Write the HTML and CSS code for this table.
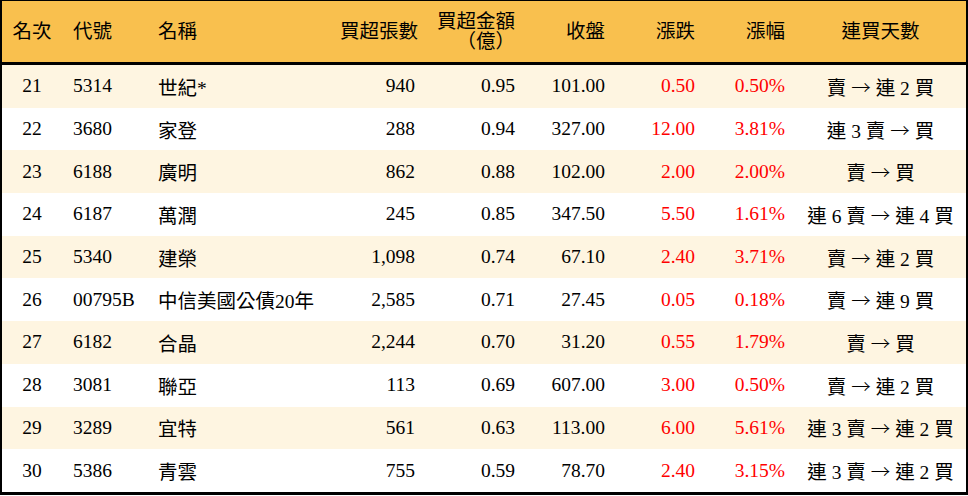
FILE: index.html
```html
<!DOCTYPE html>
<html lang="zh-Hant">
<head>
<meta charset="utf-8">
<title>買超排行</title>
<link rel="stylesheet" href="styles.css">
</head>
<body>
<div class="frame">
<table class="rank">
<colgroup>
<col class="c-rank"><col class="c-code"><col class="c-name"><col class="c-vol"><col class="c-amt"><col class="c-close"><col class="c-chg"><col class="c-pct"><col class="c-days">
</colgroup>
<thead>
<tr>
<th class="ctr">名次</th>
<th class="lft">代號</th>
<th class="lft">名稱</th>
<th class="rgt">買超張數</th>
<th class="rgt">買超金額<br>（億）</th>
<th class="rgt">收盤</th>
<th class="rgt">漲跌</th>
<th class="rgt">漲幅</th>
<th class="ctr">連買天數</th>
</tr>
</thead>
<tbody>
<tr class="alt"><td class="ctr">21</td><td class="lft">5314</td><td class="lft">世紀*</td><td class="rgt">940</td><td class="rgt">0.95</td><td class="rgt">101.00</td><td class="rgt up">0.50</td><td class="rgt up">0.50%</td><td class="ctr">賣 <span class="arw">→</span> 連 2 買</td></tr>
<tr><td class="ctr">22</td><td class="lft">3680</td><td class="lft">家登</td><td class="rgt">288</td><td class="rgt">0.94</td><td class="rgt">327.00</td><td class="rgt up">12.00</td><td class="rgt up">3.81%</td><td class="ctr">連 3 賣 <span class="arw">→</span> 買</td></tr>
<tr class="alt"><td class="ctr">23</td><td class="lft">6188</td><td class="lft">廣明</td><td class="rgt">862</td><td class="rgt">0.88</td><td class="rgt">102.00</td><td class="rgt up">2.00</td><td class="rgt up">2.00%</td><td class="ctr">賣 <span class="arw">→</span> 買</td></tr>
<tr><td class="ctr">24</td><td class="lft">6187</td><td class="lft">萬潤</td><td class="rgt">245</td><td class="rgt">0.85</td><td class="rgt">347.50</td><td class="rgt up">5.50</td><td class="rgt up">1.61%</td><td class="ctr">連 6 賣 <span class="arw">→</span> 連 4 買</td></tr>
<tr class="alt"><td class="ctr">25</td><td class="lft">5340</td><td class="lft">建榮</td><td class="rgt">1,098</td><td class="rgt">0.74</td><td class="rgt">67.10</td><td class="rgt up">2.40</td><td class="rgt up">3.71%</td><td class="ctr">賣 <span class="arw">→</span> 連 2 買</td></tr>
<tr><td class="ctr">26</td><td class="lft">00795B</td><td class="lft">中信美國公債20年</td><td class="rgt">2,585</td><td class="rgt">0.71</td><td class="rgt">27.45</td><td class="rgt up">0.05</td><td class="rgt up">0.18%</td><td class="ctr">賣 <span class="arw">→</span> 連 9 買</td></tr>
<tr class="alt"><td class="ctr">27</td><td class="lft">6182</td><td class="lft">合晶</td><td class="rgt">2,244</td><td class="rgt">0.70</td><td class="rgt">31.20</td><td class="rgt up">0.55</td><td class="rgt up">1.79%</td><td class="ctr">賣 <span class="arw">→</span> 買</td></tr>
<tr><td class="ctr">28</td><td class="lft">3081</td><td class="lft">聯亞</td><td class="rgt">113</td><td class="rgt">0.69</td><td class="rgt">607.00</td><td class="rgt up">3.00</td><td class="rgt up">0.50%</td><td class="ctr">賣 <span class="arw">→</span> 連 2 買</td></tr>
<tr class="alt"><td class="ctr">29</td><td class="lft">3289</td><td class="lft">宜特</td><td class="rgt">561</td><td class="rgt">0.63</td><td class="rgt">113.00</td><td class="rgt up">6.00</td><td class="rgt up">5.61%</td><td class="ctr">連 3 賣 <span class="arw">→</span> 連 2 買</td></tr>
<tr><td class="ctr">30</td><td class="lft">5386</td><td class="lft">青雲</td><td class="rgt">755</td><td class="rgt">0.59</td><td class="rgt">78.70</td><td class="rgt up">2.40</td><td class="rgt up">3.15%</td><td class="ctr">連 3 賣 <span class="arw">→</span> 連 2 買</td></tr>
</tbody>
</table>
</div>
</body>
</html>
```
FILE: styles.css
```css
html, body {
  margin: 0;
  padding: 0;
  background: #ffffff;
}
.frame {
  width: 968px;
  box-sizing: border-box;
  border-style: solid;
  border-color: #000;
  border-width: 1px 2px 3px 2px;
}
.rank {
  width: 100%;
  table-layout: fixed;
  border-collapse: separate;
  border-spacing: 0;
  font-family: "Liberation Serif", "Noto Sans CJK TC", serif;
  font-size: 19.5px;
  color: #000;
}
.c-rank { width: 60px; }
.c-code { width: 85px; }
.c-name { width: 183px; }
.c-vol { width: 95px; }
.c-amt { width: 100px; }
.c-close { width: 90px; }
.c-chg { width: 90px; }
.c-pct { width: 90px; }
.c-days { width: 171px; }
.rank th {
  background: #f9c04e;
  padding: 0 10px;
  font-weight: normal;
  line-height: 20px;
  border-bottom: 3px solid #000;
  box-sizing: border-box;
  white-space: nowrap;
}
.rank thead th {
  height: 64px;
}
.rank td {
  height: 42.7px;
  padding: 0 10px;
  white-space: nowrap;
  vertical-align: middle;
  box-sizing: border-box;
}
.rank tr.alt td {
  background: #fef5e1;
}
.ctr { text-align: center; }
.lft { text-align: left; }
.rgt { text-align: right; }
.rank td.up { color: #ff0000; }
.rank td.lft { padding-left: 11px; }
.rank th.lft { padding-left: 11px; }
.arw {
  font-family: "Noto Sans CJK TC", sans-serif;
  font-weight: 300;
}
```
